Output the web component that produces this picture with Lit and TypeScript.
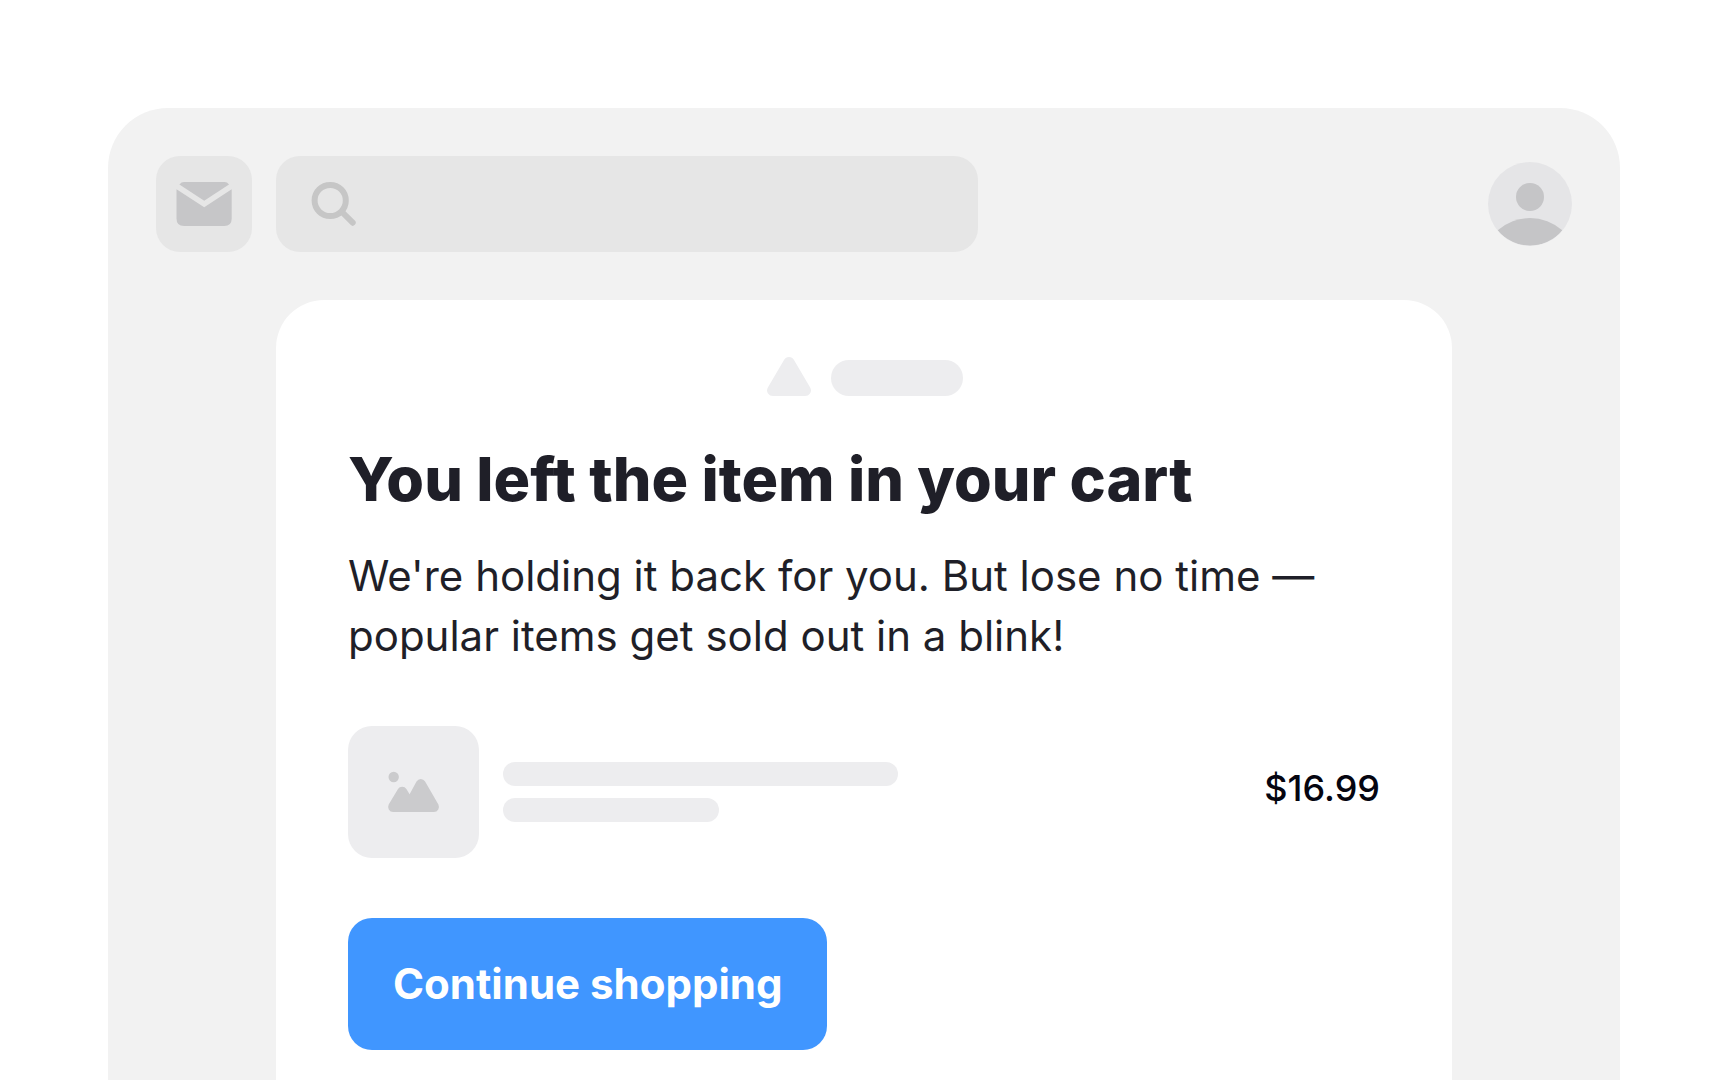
import { LitElement, html, css } from "lit";
import { customElement } from "lit/decorators.js";

@customElement("app-root")
export class AppRoot extends LitElement {
  static styles = css`
    :host {
      display: flex;
      flex-direction: column;
      box-sizing: border-box;
      min-height: 100vh;
      padding: 108px 108px 0;
      background: #ffffff;
      color: #1f1f28;
      font-family: Inter, "Liberation Sans", sans-serif;
    }
    * {
      box-sizing: border-box;
    }
    svg {
      display: block;
      flex: none;
    }
    button {
      border: 0;
      padding: 0;
      font: inherit;
      cursor: pointer;
    }
    .window {
      flex: 1;
      display: flex;
      flex-direction: column;
      gap: 48px;
      padding: 48px 48px 0;
      border-radius: 60px 60px 0 0;
      background: #f2f2f2;
    }
    .toolbar {
      display: flex;
      align-items: center;
      gap: 24px;
    }
    .mail {
      flex: none;
      border-radius: 24px;
      background: #e6e6e6;
    }
    .search {
      flex: 0 1 702px;
      display: flex;
      align-items: center;
      gap: 16px;
      height: 96px;
      padding: 0 34px;
      border-radius: 24px;
      background: #e6e6e6;
    }
    .search-input {
      flex: 1;
      min-width: 0;
      border: 0;
      outline: 0;
      background: transparent;
      color: inherit;
      font: inherit;
      font-size: 36px;
    }
    .avatar {
      flex: none;
      margin-left: auto;
      border-radius: 50%;
      background: #e5e5e7;
      overflow: hidden;
    }
    .message {
      flex: 1;
      display: flex;
      flex-direction: column;
      align-items: stretch;
      margin: 0 120px;
      padding: 57px 72px 30px;
      border-radius: 48px 48px 0 0;
      background: #ffffff;
    }
    .brand {
      display: flex;
      justify-content: center;
      align-items: flex-end;
      gap: 20px;
      padding-left: 2px;
    }
    .brand-name {
      width: 132px;
      height: 36px;
      border-radius: 18px;
      background: #ededef;
    }
    .title {
      margin: 47px 0 0;
      font-size: 61px;
      line-height: 72px;
      font-weight: 800;
    }
    .text {
      margin: 31px 0 0;
      font-size: 42px;
      line-height: 60px;
    }
    .product {
      display: flex;
      gap: 24px;
      margin: 60px 0;
    }
    .thumb {
      flex: none;
      border-radius: 24px;
      background: #ededef;
    }
    .details {
      flex: 1;
      display: flex;
      flex-direction: column;
      gap: 12px;
      padding-top: 36px;
    }
    .line {
      width: 395px;
      max-width: 100%;
      height: 24px;
      border-radius: 12px;
      background: #ededef;
    }
    .line.short {
      width: 216px;
    }
    .price {
      padding-top: 36px;
      color: #050510;
      font-size: 36px;
      line-height: 52px;
      font-weight: 500;
    }
    .button {
      align-self: flex-start;
      padding: 36px 45px;
      border-radius: 24px;
      background: #4096ff;
      color: #ffffff;
      font-size: 42px;
      line-height: 60px;
      font-weight: 700;
    }
  `;

  render() {
    return html`
      <div class="window">
        <header class="toolbar">
          <button class="mail" type="button" aria-label="Mail">
            <svg width="96" height="96" viewBox="0 0 96 96" fill="#c6c6c8">
              <path d="M23.4 28.4Q25.3 26 28 26H68.5Q71.2 26 73 28.4L48.2 44.8Z" />
              <path d="M20.5 33.2L48.2 51.2L75.7 33.2V62.5Q75.7 70 68.2 70H28Q20.5 70 20.5 62.5Z" />
            </svg>
          </button>
          <label class="search">
            <svg width="48" height="48" viewBox="0 0 48 48" fill="none" stroke="#c6c6c6" stroke-width="6" stroke-linecap="round">
              <circle cx="20.2" cy="20.5" r="15.6" />
              <path d="M32 32L42.7 42.7" />
            </svg>
            <input class="search-input" type="search" aria-label="Search" />
          </label>
          <button class="avatar" type="button" aria-label="Account">
            <svg width="84" height="84" viewBox="0 0 84 84" fill="#c5c5c7">
              <circle cx="42" cy="35" r="14" />
              <path d="M9.7 68.3A48.6 48.6 0 0 1 74.3 68.3A42 42 0 0 1 9.7 68.3Z" />
            </svg>
          </button>
        </header>
        <main class="message">
          <div class="brand">
            <svg width="44" height="39" viewBox="0 0 44 39" fill="#ededef">
              <path d="M17 2.9Q18.6 0 22 0T27 2.9L43 30.2Q45 33.8 43 36.5Q41.4 39 38 39H6Q2.6 39 1 36.5Q-1 33.8 1 30.2Z" />
            </svg>
            <div class="brand-name"></div>
          </div>
          <h1 class="title">You left the item in your cart</h1>
          <p class="text">We're holding it back for you. But lose no time — popular items get sold out in a blink!</p>
          <section class="product">
            <svg class="thumb" width="131" height="132" viewBox="0 0 131 132" fill="#cbcbcd">
              <circle cx="45.7" cy="51" r="5.2" />
              <path d="M40.7 78.5L50 62.9Q51.4 60.7 54.2 60.7T58.4 62.9L61.6 68.3L68.5 55.6Q70 53 72.8 53T77.1 55.6L90.4 78.5Q91.6 81 90.3 83.5Q88.7 86 86 86H45Q42.3 86 40.8 83.5Q39.5 81 40.7 78.5Z" />
            </svg>
            <div class="details">
              <div class="line"></div>
              <div class="line short"></div>
            </div>
            <div class="price">$16.99</div>
          </section>
          <button class="button" type="button">Continue shopping</button>
        </main>
      </div>
    `;
  }
}
